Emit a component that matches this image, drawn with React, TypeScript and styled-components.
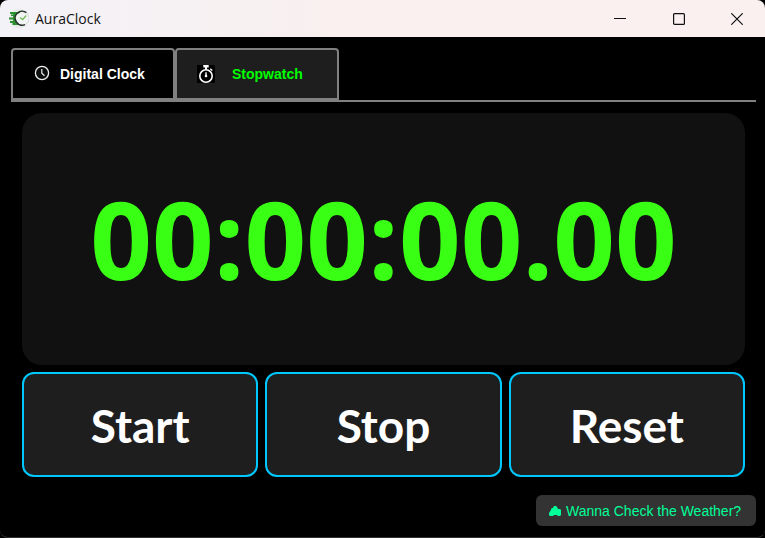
import React, { useEffect, useRef, useState } from "react";
import styled, { createGlobalStyle } from "styled-components";

const GlobalStyle = createGlobalStyle`
  *, *::before, *::after { box-sizing: border-box; }
  html, body, #root { height: 100%; }
  body { margin: 0; background: #000; font-family: "Liberation Sans", Arial, sans-serif; }
  button { font-family: inherit; cursor: pointer; }
`;

const Window = styled.div`
  display: flex;
  flex-direction: column;
  min-height: 100%;
  background: #000;
  border-bottom: 1px solid #333;
  border-radius: 8px;
  overflow: hidden;
`;

const TitleBar = styled.header`
  display: flex;
  align-items: center;
  height: 37px;
  padding-left: 8px;
  background: linear-gradient(90deg, #f3f2f7, #f9f0ef 45%);
  color: #111;
`;

const Title = styled.h1`
  flex: 1;
  margin: 0 0 0 6px;
  font: 400 14px/20px "Open Sans", "Segoe UI", sans-serif;
`;

const CaptionButtons = styled.div`
  display: flex;
  gap: 1px;
`;

const CaptionButton = styled.button`
  display: grid;
  place-items: center;
  width: 58px;
  height: 36px;
  padding: 0;
  border: 0;
  background: transparent;
  color: #111;
  &:last-child { width: 56px; }
`;

const Content = styled.main`
  display: flex;
  flex: 1;
  flex-direction: column;
  padding: 11px 9px 11px 11px;
`;

const TabList = styled.div`
  display: flex;
  border-bottom: 2px solid #808080;
`;

const Tab = styled.button<{ $active: boolean; $gap: number }>`
  display: flex;
  align-items: center;
  gap: ${(p) => p.$gap}px;
  width: 164px;
  height: 52px;
  padding: 0 0 0 20px;
  border: 2px solid #808080;
  border-radius: 4px 4px 0 0;
  background: ${(p) => (p.$active ? "#1e1e1e" : "#000")};
  color: ${(p) => (p.$active ? "#00ff00" : "#fff")};
  font-size: 14px;
  font-weight: 700;
`;

const Panel = styled.section`
  display: flex;
  flex: 1;
  flex-direction: column;
  gap: 7px;
  padding: 11px 11px 0;
`;

const Display = styled.div`
  display: grid;
  flex: 1;
  place-items: center;
  min-height: 160px;
  border-radius: 20px;
  background: #111;
  color: #39ff14;
  font: 700 108px/128px "Open Sans", "Segoe UI", sans-serif;
`;

const Controls = styled.div`
  display: grid;
  grid-template-columns: repeat(3, 1fr);
  gap: 7px;
`;

const ControlButton = styled.button`
  height: 105px;
  padding: 2px 0 0;
  border: 2px solid #00c8ff;
  border-radius: 12px;
  background: #1e1e1e;
  color: #fff;
  && { font: 700 46px/56px Lato, Calibri, sans-serif; }
`;

const Footer = styled.footer`
  display: flex;
  justify-content: flex-end;
  padding-top: 18px;
`;

const WeatherButton = styled.button`
  display: flex;
  align-items: center;
  gap: 4px;
  min-width: 220px;
  height: 31px;
  padding: 0 12px;
  border: 0;
  border-radius: 6px;
  background: #333;
  color: #00ff99;
  font-size: 14px;
`;

const AppLogo = () => (
  <svg width="21" height="21" viewBox="0 0 21 21" fill="none" aria-hidden="true">
    <circle cx="11" cy="10.5" r="9.8" fill="#e6ebe7" />
    <path d="M2 4h10v2H8.5l-1 2H7v5h.5l1.5 2.500 3 1.5H4.500v-2H2v-2h3v-1.500H1v-2h4V8H3V6.500h2V6H2z" fill="#2c9132" />
    <circle cx="14.5" cy="10.500" r="6.500" fill="#f1f4f2" />
    <path d="M18.500 4.700A7 7 0 1 0 17 16.600" stroke="#26302a" strokeWidth="1.500" />
    <path d="M18.500 4.700a7 7 0 0 1-1.500 11.900" stroke="#d3d9d5" strokeWidth="1" />
    <path d="m12 9.500 2.700 2 3.500-4" stroke="#74bd58" strokeWidth="1.300" />
  </svg>
);

const ClockIcon = () => (
  <svg width="18" height="18" viewBox="0 0 18 18" fill="none" stroke="#eee" aria-hidden="true">
    <circle cx="9" cy="8" r="6.6" strokeWidth="1.3" fill="#0b0f0d" />
    <path d="M8.8 4v4.3l2.7 2.5" strokeWidth="1.2" />
  </svg>
);

const StopwatchIcon = () => (
  <svg width="18" height="18" viewBox="0 0 18 18" fill="none" aria-hidden="true">
    <path fill="#000" d="M0 0h18v18H0z" />
    <path d="M6.3 0h5.4v2.6H6.3z" fill="#fff" />
    <path d="M9 2v3" stroke="#fff" strokeWidth="2" />
    <path d="m13.3 3.8 2 1.8" stroke="#fff" strokeWidth="1.3" />
    <circle cx="9" cy="11" r="6.2" stroke="#fff" strokeWidth="1.6" />
    <path d="M9 7.3v3" stroke="#fff" strokeWidth="1.4" />
    <circle cx="9" cy="11" r="1.3" fill="#fff" />
  </svg>
);

const CloudIcon = () => (
  <svg width="14" height="12" viewBox="0 0 14 12" fill="currentColor" aria-hidden="true">
    <path d="M3 5V4l1-1h1l1-2h2l1 1 1 2h2l1 1v5l-1 1h-2l-1-1H6l-1 1H2l-1-1V8z" />
  </svg>
);

const format = (ms: number) => {
  const pad = (n: number) => String(Math.floor(n)).padStart(2, "0");
  return `${pad(ms / 3600000)}:${pad((ms / 60000) % 60)}:${pad((ms / 1000) % 60)}.${pad((ms / 10) % 100)}`;
};

export default function App() {
  const [tab, setTab] = useState<"clock" | "stopwatch">("stopwatch");
  const [elapsed, setElapsed] = useState(0);
  const [running, setRunning] = useState(false);
  const [now, setNow] = useState(() => new Date());
  const base = useRef(0);

  useEffect(() => {
    if (!running) return;
    const started = Date.now() - base.current;
    const id = setInterval(() => {
      base.current = Date.now() - started;
      setElapsed(base.current);
    }, 10);
    return () => clearInterval(id);
  }, [running]);

  useEffect(() => {
    if (tab !== "clock") return;
    setNow(new Date());
    const id = setInterval(() => setNow(new Date()), 1000);
    return () => clearInterval(id);
  }, [tab]);

  const reset = () => {
    setRunning(false);
    base.current = 0;
    setElapsed(0);
  };

  return (
    <>
      <GlobalStyle />
      <Window>
        <TitleBar>
          <AppLogo />
          <Title>AuraClock</Title>
          <CaptionButtons>
            <CaptionButton aria-label="Minimize">
              <svg width="12" height="12" viewBox="0 0 12 12" stroke="currentColor"><path d="M0 5.5h12" /></svg>
            </CaptionButton>
            <CaptionButton aria-label="Maximize">
              <svg width="12" height="12" viewBox="0 0 12 12" fill="none" stroke="currentColor" strokeWidth="1.2"><rect x=".6" y=".6" width="10.8" height="10.8" rx="1" /></svg>
            </CaptionButton>
            <CaptionButton aria-label="Close">
              <svg width="12" height="12" viewBox="0 0 12 12" stroke="currentColor" strokeWidth="1.2"><path d="m.3.3 11.4 11.4M11.7.3.3 11.7" /></svg>
            </CaptionButton>
          </CaptionButtons>
        </TitleBar>
        <Content>
          <TabList role="tablist">
            <Tab role="tab" aria-selected={tab === "clock"} $active={tab === "clock"} $gap={9} onClick={() => setTab("clock")}>
              <ClockIcon />
              Digital Clock
            </Tab>
            <Tab role="tab" aria-selected={tab === "stopwatch"} $active={tab === "stopwatch"} $gap={17} onClick={() => setTab("stopwatch")}>
              <StopwatchIcon />
              Stopwatch
            </Tab>
          </TabList>
          <Panel role="tabpanel">
            <Display>{tab === "stopwatch" ? format(elapsed) : now.toTimeString().slice(0, 8)}</Display>
            {tab === "stopwatch" && (
              <Controls>
                <ControlButton onClick={() => setRunning(true)}>Start</ControlButton>
                <ControlButton onClick={() => setRunning(false)}>Stop</ControlButton>
                <ControlButton onClick={reset}>Reset</ControlButton>
              </Controls>
            )}
          </Panel>
          <Footer>
            <WeatherButton>
              <CloudIcon />
              Wanna Check the Weather?
            </WeatherButton>
          </Footer>
        </Content>
      </Window>
    </>
  );
}
